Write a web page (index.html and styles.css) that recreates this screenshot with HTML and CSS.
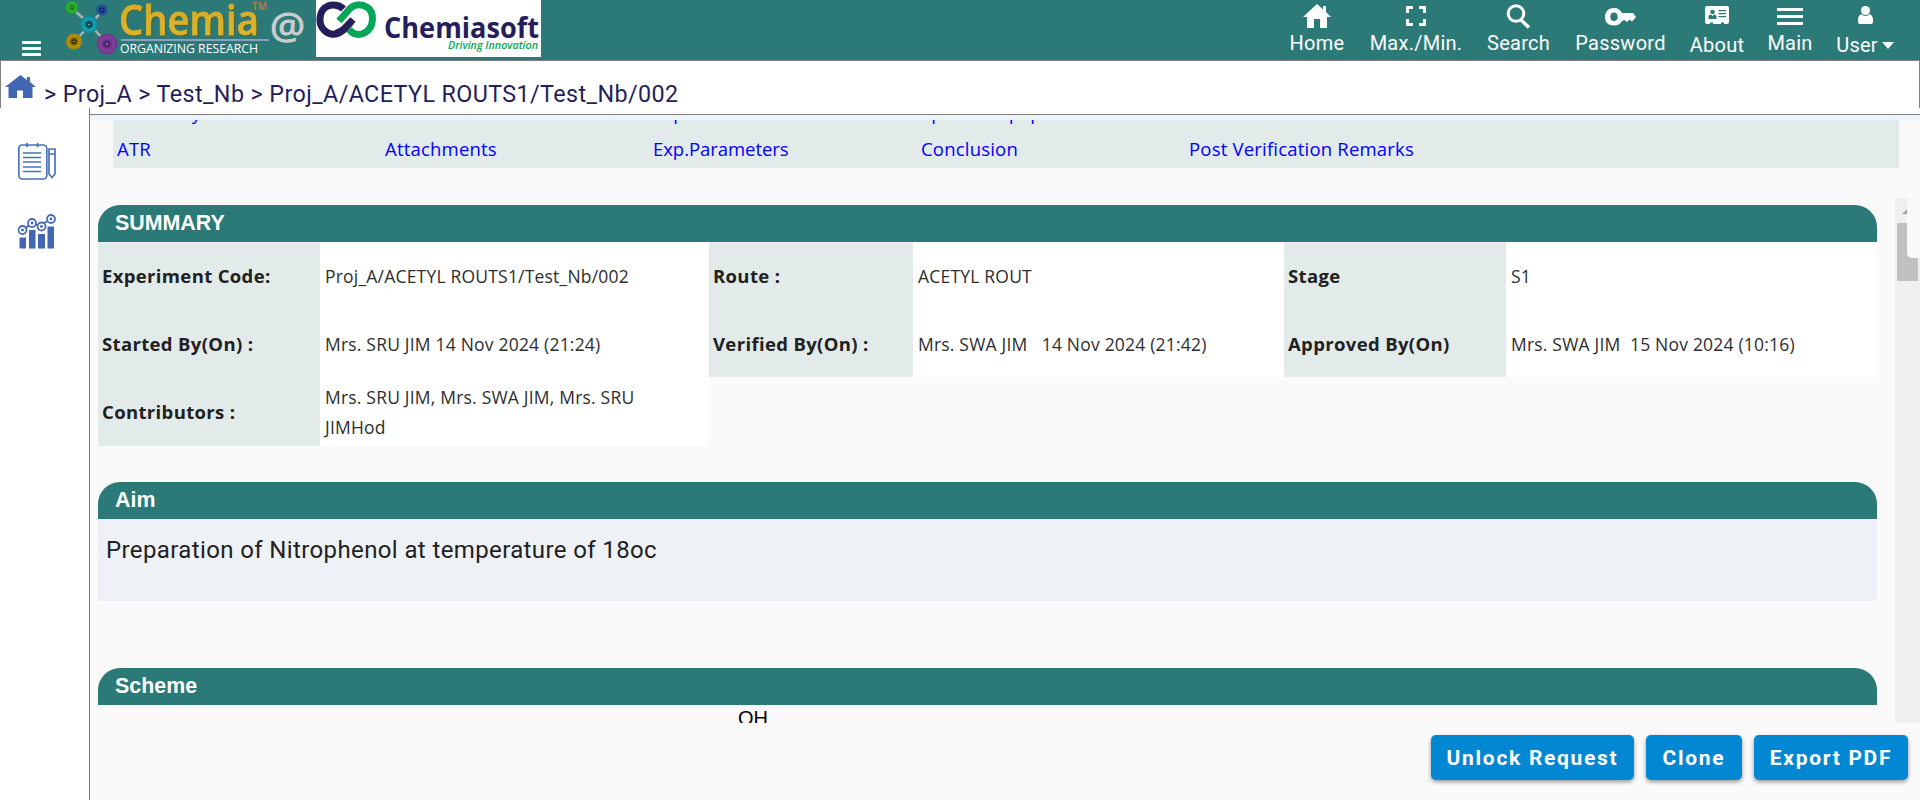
FILE: index.html
```html
<!DOCTYPE html>
<html lang="en">
<head>
<meta charset="utf-8">
<title>Chemia</title>
<link rel="stylesheet" href="styles.css">
</head>
<body>
<header class="topbar">
  <div class="burger"><span></span><span></span><span></span></div>
  <svg class="logo" width="246" height="60" viewBox="0 0 246 60">
    <defs>
      <radialGradient id="g1"><stop offset="0" stop-color="#7f7"/><stop offset=".15" stop-color="#1a6a1a"/><stop offset=".6" stop-color="#2dbb2d"/><stop offset="1" stop-color="#1d9a2a"/></radialGradient>
      <radialGradient id="g2"><stop offset="0" stop-color="#9bf"/><stop offset=".2" stop-color="#0a1c55"/><stop offset=".7" stop-color="#2450a8"/><stop offset="1" stop-color="#1c4a90"/></radialGradient>
      <radialGradient id="g3"><stop offset="0" stop-color="#9ff"/><stop offset=".15" stop-color="#02343c"/><stop offset=".6" stop-color="#17a5b4"/><stop offset="1" stop-color="#0d8090"/></radialGradient>
      <radialGradient id="g4"><stop offset="0" stop-color="#fe8"/><stop offset=".15" stop-color="#2c2200"/><stop offset=".6" stop-color="#b58d08"/><stop offset="1" stop-color="#a8850c"/></radialGradient>
      <radialGradient id="g5"><stop offset="0" stop-color="#d9a8f0"/><stop offset=".15" stop-color="#4c1c66"/><stop offset=".6" stop-color="#80449c"/><stop offset="1" stop-color="#6c3688"/></radialGradient>
      <linearGradient id="gold" x1="0" y1="0" x2="0" y2="1"><stop offset="0" stop-color="#d9a520"/><stop offset="1" stop-color="#d8bb2e"/></linearGradient>
    </defs>
    <path d="M12 8 30 25M42 11 30 25M14 42 30 25 47 43" stroke="#a9b4b4" stroke-width="2.5" fill="none"/>
    <circle cx="12" cy="7.500" r="6.500" fill="url(#g1)"/>
    <circle cx="42" cy="10" r="5.500" fill="url(#g2)"/>
    <circle cx="29" cy="24.500" r="9" fill="url(#g3)"/>
    <circle cx="14" cy="41.500" r="8" fill="url(#g4)"/>
    <circle cx="47" cy="44" r="10.500" fill="url(#g5)"/>
    <text x="59" y="34.500" class="logo-name" textLength="140" lengthAdjust="spacingAndGlyphs">Chemia</text>
    <text x="192" y="9.500" class="logo-tm" textLength="15" lengthAdjust="spacingAndGlyphs">TM</text>
    <path d="M61 40H209" stroke="#8aa0bd" stroke-width="2"/>
    <text x="60" y="53" class="logo-tag" textLength="138" lengthAdjust="spacingAndGlyphs">ORGANIZING RESEARCH</text>
    <text x="210" y="38.500" class="logo-at" textLength="35" lengthAdjust="spacingAndGlyphs">@</text>
  </svg>
  <svg class="brand" width="225" height="57" viewBox="0 0 225 57">
    <rect width="225" height="57" fill="#fff"/>
    <g fill="none" stroke-width="7">
      <path d="M27.500 9C23 4.500 16 4.500 12 6 2 10 2 25 8.500 30.500 14 36 22 35 27 30L35 22" stroke="#251e5c"/>
      <path d="M33 29.500C38 35.500 45 35.500 49 32.500 59 27 58 12 51.500 7.500 45 3.500 38 4 33.500 9L23 21" stroke="#04a758"/>
      <path d="M20 33.500 27.500 30 37 19.500" stroke="#251e5c"/>
    </g>
    <text x="68" y="38" class="brand-name" textLength="155" lengthAdjust="spacingAndGlyphs">Chemiasoft</text>
    <text x="132" y="49" class="brand-tag" textLength="90" lengthAdjust="spacingAndGlyphs">Driving Innovation</text>
  </svg>
  <nav class="menu">
    <a class="m-home"><svg width="28" height="24" viewBox="0 0 28 24"><path d="M14 0 0 13H4V24H11V15H17V24H24V13H28L23 8V2H20V5.500Z"/></svg><span>Home</span></a>
    <a class="m-max"><svg width="20" height="20" viewBox="0 0 20 20"><path d="M0 0H7V3H3V7H0ZM13 0H20V7H17V3H13ZM0 13H3V17H7V20H0ZM17 13H20V20H13V17H17Z"/></svg><span>Max./Min.</span></a>
    <a class="m-search"><svg width="26" height="25" viewBox="0 0 26 25"><circle cx="10" cy="9.500" r="7.800" fill="none" stroke="#fff" stroke-width="3"/><path d="m15 16 8 7.500" stroke="#fff" stroke-width="3.500"/></svg><span>Search</span></a>
    <a class="m-pass"><svg width="31" height="18" viewBox="0 0 31 18"><path fill-rule="evenodd" d="M9 0C13 0 15.500 2 17 5H28L31 9 27 13.500 24.500 11.500 22 14 19.500 12 17 13C15 16 13 17.500 9 17.500 3 17.500 0 14 0 9S3 0 9 0ZM9 4.500A3.600 4.300 0 1 0 9 13.200 3.600 4.300 0 1 0 9 4.500Z"/></svg><span>Password</span></a>
    <a class="m-about"><svg width="24" height="18" viewBox="0 0 24 18"><path d="M2 0H22Q24 0 24 2V16Q24 18 22 18H19V16.500H16V18H8V16.500H5V18H2Q0 18 0 16V2Q0 0 2 0Z"/><g fill="#2b7a77"><circle cx="7.500" cy="6" r="2.300"/><path d="M3.500 13V10Q4 8.500 6 8.500L7.500 10 9 8.500Q11 8.500 11.500 10V13ZM13.500 4H21V5.200H13.500ZM13.500 7H21V8.200H13.500ZM13.500 10H21V11.200H13.500Z"/></g></svg><span>About</span></a>
    <a class="m-main"><svg width="26" height="18" viewBox="0 0 26 18"><path d="M0 0H26V3H0ZM0 7H26V10H0ZM0 14H26V17H0Z"/></svg><span>Main</span></a>
    <a class="m-user"><svg width="15" height="18" viewBox="0 0 15 18"><circle cx="7.500" cy="4.500" r="4.500"/><path d="M3 8Q7.500 12 12 8 15 10 15 14V16Q15 18 13 18H2Q0 18 0 16V14Q0 10 3 8Z"/></svg><span>User<i class="caret"></i></span></a>
  </nav>
</header>
<div class="crumbs">
  <svg width="31" height="23" viewBox="0 0 31 23"><path fill="#4267b2" d="M15.500 0 0 12H3.500V23H12V15.500H18V23H27.500V12H31L25 7V2H22V5Z"/></svg>
  <span class="trail">&gt; Proj_A &gt; Test_Nb &gt; Proj_A/ACETYL ROUTS1/Test_Nb/002</span>
</div>
<div class="shell">
  <aside class="side">
    <svg width="38" height="37" viewBox="0 0 38 37" fill="none" stroke="#4a72b8" stroke-width="1.700"><rect x=".8" y="2" width="28" height="34" rx="3.500"/><path d="M9 0V4M19.500 0V4M5 10H23M5 14.500H23M5 19H23M5 24H23M5 28.500H23M31 6H37V31L34 34.500 31 31ZM31 11H37"/></svg>
    <svg width="38" height="35" viewBox="0 0 38 35"><path fill="#4267b2" d="M1.500 23.500H8V34.500H1.500ZM11 16H17.500V34.500H11ZM20 20H27V34.500H20ZM29.500 12.500H36V34.500H29.500Z"/><g fill="#fff" stroke="#4a6cb5" stroke-width="1.800"><path d="M8 14 11 11M17 10 20 11.500M26 9 30 7"/><circle cx="4.500" cy="16" r="4"/><circle cx="14" cy="9" r="4"/><circle cx="23.500" cy="12.500" r="4"/><circle cx="33" cy="5" r="4"/></g><g fill="#4267b2"><circle cx="4.500" cy="16" r="1.400"/><circle cx="14" cy="9" r="1.400"/><circle cx="23.500" cy="12.500" r="1.400"/><circle cx="33" cy="5" r="1.400"/></g></svg>
  </aside>
  <main class="main">
    <div class="strip"></div>
    <div class="links">
      <a>Summary</a><a></a><a>Exp.</a><a class="l-equip">Special Equipment</a><a></a>
      <a>ATR</a><a>Attachments</a><a class="l-param">Exp.Parameters</a><a>Conclusion</a><a>Post Verification Remarks</a>
    </div>
    <div class="scroll">
      <div class="content">
        <h2 class="bar">SUMMARY</h2>
        <div class="grid">
          <b>Experiment Code:</b><span>Proj_A/ACETYL ROUTS1/Test_Nb/002</span>
          <b>Route :</b><span>ACETYL ROUT</span>
          <b>Stage</b><span>S1</span>
          <b>Started By(On) :</b><span>Mrs. SRU JIM 14 Nov 2024 (21:24)</span>
          <b>Verified By(On) :</b><span>Mrs. SWA JIM &nbsp; 14 Nov 2024 (21:42)</span>
          <b>Approved By(On)</b><span>Mrs. SWA JIM &nbsp;15 Nov 2024 (10:16)</span>
          <b>Contributors :</b><span>Mrs. SRU JIM, Mrs. SWA JIM, Mrs. SRU<br>JIMHod</span>
        </div>
        <h2 class="bar bar-aim">Aim</h2>
        <div class="aim">Preparation of Nitrophenol at temperature of 18oc</div>
        <h2 class="bar bar-scheme">Scheme</h2>
        <div class="scheme">OH</div>
      </div>
      <div class="track"><i class="up"></i><div class="thumb"></div><div class="tab"></div></div>
    </div>
    <div class="actions"><button class="b1">Unlock Request</button><button class="b2">Clone</button><button class="b3">Export PDF</button></div>
  </main>
</div>
</body>
</html>
```
FILE: styles.css
```css
* { box-sizing: border-box; }
body { margin: 0; height: 800px; overflow: hidden; background: #fff; font-family: Roboto, sans-serif; color: #212121; }
.topbar { height: 60px; background: #2b7a77; display: flex; align-items: flex-start; }
.burger { width: 62px; padding: 41px 0 0 22px; display: flex; flex-direction: column; gap: 3px; flex: none; }
.burger span { width: 19px; height: 3px; background: #fff; }
.logo { margin-left: -2px; width: 246px; flex: none; }
.brand { margin-left: 10px; flex: none; }
.logo-name { font: 600 41px "Open Sans", sans-serif; fill: url(#gold); stroke: #d8ae26; stroke-width: .8; filter: drop-shadow(1px 1px 0 #4d5f39); }
.logo-tm { font: 700 10px "Open Sans", sans-serif; fill: #b5793a; }
.logo-tag { font: 400 13px "Open Sans", sans-serif; fill: #fff; }
.logo-at { font: 400 36px "Open Sans", sans-serif; fill: #ccc; stroke: #ccc; stroke-width: 1; }
.brand-name { font: 700 29px "Open Sans", sans-serif; fill: #251e5c; }
.brand-tag { font: italic 600 11px "Open Sans", sans-serif; fill: #04a758; }
.menu { margin-left: auto; display: flex; color: #fff; font-size: 20px; height: 60px; padding-right: 15px; }
.menu a { display: flex; flex-direction: column; align-items: center; white-space: nowrap; }
.menu svg { fill: #fff; }
.menu span { line-height: 24px; margin-top: auto; margin-bottom: 5px; letter-spacing: .25px; }
.m-home { width: 80px; padding-top: 4px; }
.m-max { width: 118px; padding-top: 6px; }
.m-search { width: 87px; padding-top: 4px; }
.m-pass { width: 117px; padding-top: 8px; }
.m-about { width: 76px; padding-top: 6px; }
.m-main { width: 70px; padding-top: 8px; }
.m-user { width: 80px; padding-top: 6px; }
.menu .m-about span, .menu .m-user span { margin-bottom: 3px; }
.caret { display: inline-block; margin-left: 4px; vertical-align: 3px; border: 6px solid transparent; border-top: 7px solid #fff; border-bottom: 0; }
.crumbs { height: 48px; border: 1px solid #808080; border-bottom: 0; padding: 14px 0 0 4px; display: flex; gap: 8px; }
.trail { font-size: 23.300px; line-height: 38px; color: #251e5c; letter-spacing: .4px; white-space: nowrap; }
.shell { display: flex; height: 692px; }
.side { width: 89px; padding: 35px 0 0 18px; display: flex; flex-direction: column; gap: 34px; flex: none; }
.main { width: 1831px; border-left: 1px solid #808080; background: #fafafa; }
.strip { height: 12px; background: linear-gradient(#fff 6px, #808080 6px, #808080 7px, #edf3f7 7px); }
.links { margin-left: 23px; width: 1786px; height: 48px; overflow: hidden; background: #e2ebe9; display: grid; grid-template-columns: repeat(5, 268px); grid-template-rows: 36px 36px; align-content: end; align-items: center; font: 18.500px/30px "Open Sans", sans-serif; letter-spacing: .2px; color: #00f; padding: 0 0 1px 4px; }
.links a { white-space: nowrap; }
.links .l-param { letter-spacing: -.05px; }
.links .l-equip { word-spacing: 4px; }
.scroll { margin-top: 30px; height: 525px; display: flex; justify-content: space-between; overflow: hidden; }
.content { margin: 7px 0 0 8px; width: 1779px; }
.bar { margin: 0; height: 37px; background: #2b7a77; border-radius: 22px 22px 0 0; color: #fff; font: 700 21.400px/37px "Liberation Sans", Arial, sans-serif; padding-left: 17px; }
.grid { display: grid; grid-template-columns: 222px 389px 204px 371px 222px 371px; grid-template-rows: 68px 67px 69px; font: 400 17.500px/30px "Open Sans", sans-serif; letter-spacing: .2px; }
.grid b, .grid span { padding-left: 5px; display: grid; align-content: center; white-space: nowrap; }
.grid b { background: #e2ebe9; font-weight: 700; font-size: 18.500px; letter-spacing: .35px; padding-left: 4px; }
.grid span { background: #fff; color: #2e2e2e; }
.bar-aim { margin-top: 36px; }
.aim { height: 82px; background: #eef1f6; font-size: 24px; line-height: 30px; padding: 16px 0 0 8px; letter-spacing: .38px; }
.bar-scheme { margin-top: 67px; }
.scheme { font: 20px/27px "Liberation Sans", Arial, sans-serif; color: #000; padding-left: 640px; }
.track { position: relative; width: 25px; background: #f0f0f0; padding: 10px 2px 0; }
.up { display: block; width: 0; margin: 0 auto 9px; border: 6px solid transparent; border-top: 0; border-bottom: 6px solid #a3a3a3; }
.thumb { height: 58px; background: #c1c1c1; }
.tab { position: absolute; right: 0; top: 0; width: 13px; height: 60px; background: #f8f9fb; border-radius: 5px 0 0 5px; }
.actions { display: flex; justify-content: flex-end; gap: 12px; padding: 12px 12px 0 0; }
.actions button { height: 45px; border: 0; border-radius: 5px; background: #0288d3; color: #fff; font: 700 21px Roboto, sans-serif; letter-spacing: 1.700px; padding: 0; box-shadow: 0 2px 4px rgba(0,0,0,.4); white-space: nowrap; }
.b1 { width: 203px; }
.b2 { width: 96px; }
.b3 { width: 154px; }
```
